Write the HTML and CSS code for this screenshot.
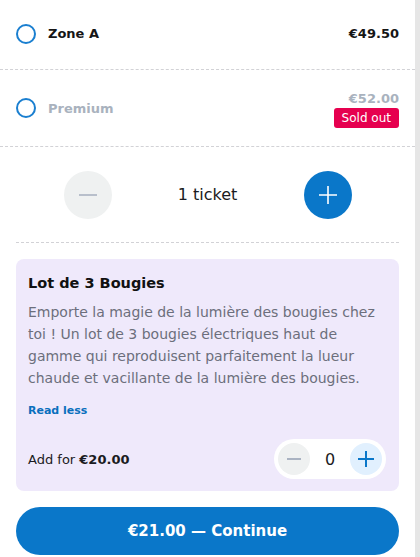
FILE: index.html
```html
<!DOCTYPE html>
<html lang="fr">
<head>
<meta charset="utf-8">
<title>Tickets</title>
<link rel="stylesheet" href="styles.css">
</head>
<body>
<div class="page">
  <main class="content">
    <div class="option">
      <span class="radio"></span>
      <span class="option-name">Zone A</span>
      <span class="option-price">€49.50</span>
    </div>
    <div class="option option-disabled">
      <span class="radio"></span>
      <span class="option-name">Premium</span>
      <span class="option-side">
        <span class="option-price">€52.00</span>
        <span class="badge">Sold out</span>
      </span>
    </div>
    <div class="qty">
      <button class="round round-off" aria-label="Moins">
        <svg width="20" height="20" viewBox="0 0 20 20"><path d="M1 10h18" stroke="#aab3c2" stroke-width="1.6"/></svg>
      </button>
      <span class="qty-label">1 ticket</span>
      <button class="round round-on" aria-label="Plus">
        <svg width="20" height="20" viewBox="0 0 20 20"><path d="M1 10h18M10 1v18" stroke="#fff" stroke-width="1.6"/></svg>
      </button>
    </div>
    <section class="card">
      <h2 class="card-title">Lot de 3 Bougies</h2>
      <p class="card-desc">Emporte la magie de la lumière des bougies chez toi ! Un lot de 3 bougies électriques haut de gamme qui reproduisent parfaitement la lueur chaude et vacillante de la lumière des bougies.</p>
      <a class="card-link" href="#">Read less</a>
      <div class="card-foot">
        <span class="add">Add for <b>€20.00</b></span>
        <div class="pill">
          <button class="mini mini-off" aria-label="Moins">
            <svg width="14" height="14" viewBox="0 0 14 14"><path d="M0 7h14" stroke="#aab3c2" stroke-width="2"/></svg>
          </button>
          <span class="pill-num">0</span>
          <button class="mini mini-on" aria-label="Plus">
            <svg width="16" height="16" viewBox="0 0 16 16"><path d="M0 8h16M8 0v16" stroke="#0a77c9" stroke-width="2"/></svg>
          </button>
        </div>
      </div>
    </section>
    <button class="continue">€21.00 — Continue</button>
  </main>
  <div class="track"></div>
</div>
</body>
</html>
```
FILE: styles.css
```css
* { box-sizing: border-box; }
html, body { margin: 0; padding: 0; background: #fff; }
body {
  font-family: "DejaVu Sans", "Liberation Sans", sans-serif;
  color: #161616;
}
.page {
  display: flex;
  width: 420px;
  min-height: 557px;
}
.content {
  flex: 1;
  display: flex;
  flex-direction: column;
  padding-bottom: 2px;
}
.track {
  width: 5px;
  background: #e6e6e6;
}
.option {
  display: flex;
  align-items: center;
  padding: 0 16px 0 16px;
  border-bottom: 1px dashed #d2d2d6;
}
.option:first-child { height: 70px; padding-bottom: 2px; }
.option-disabled { height: 77px; }
.radio {
  width: 20px;
  height: 20px;
  border: 2px solid #1a7fd0;
  border-radius: 50%;
  flex: none;
}
.option-name {
  margin-left: 12px;
  font-size: 13px;
  font-weight: bold;
  flex: 1;
}
.option-price {
  font-size: 13px;
  font-weight: bold;
}
.option-disabled .option-name,
.option-disabled .option-price { color: #a9b2be; }
.option-side {
  display: flex;
  flex-direction: column;
  align-items: flex-end;
  gap: 2px;
  margin-top: 2px;
}
.badge {
  background: #e6004f;
  color: #fff;
  font-size: 12px;
  line-height: 20px;
  padding: 0 8px;
  border-radius: 3px;
}
.qty {
  display: flex;
  align-items: center;
  justify-content: center;
  height: 96px;
  margin: 0 16px;
  border-bottom: 1px dashed #d2d2d6;
}
.round {
  width: 48px;
  height: 48px;
  border-radius: 50%;
  border: 0;
  padding: 0;
  display: flex;
  align-items: center;
  justify-content: center;
}
.round-off { background: #eff1f1; }
.round-on { background: #0a77c9; }
.qty-label {
  width: 192px;
  text-align: center;
  font-size: 16px;
  color: #1b1b22;
}
.card {
  margin: 16px 16px 0;
  background: #efe9fb;
  border-radius: 8px;
  padding: 14px 12px 12px;
  display: flex;
  flex-direction: column;
}
.card-title {
  margin: 0;
  font-size: 14.5px;
  line-height: 20px;
  font-weight: bold;
  color: #111;
}
.card-desc {
  margin: 8px 0 0;
  font-size: 14px;
  line-height: 22px;
  color: #6c6f7c;
}
.card-link {
  margin-top: 13px;
  font-size: 11px;
  line-height: 18px;
  font-weight: bold;
  color: #0a6fbd;
  text-decoration: none;
}
.card-foot {
  margin-top: 19px;
  display: flex;
  align-items: center;
  justify-content: space-between;
}
.add {
  font-size: 13px;
  color: #1b1b22;
}
.add b { font-weight: bold; }
.pill {
  display: flex;
  align-items: center;
  background: #fff;
  border-radius: 20px;
  padding: 4px;
  height: 40px;
  margin-right: 1px;
}
.mini {
  width: 32px;
  height: 32px;
  border-radius: 50%;
  border: 0;
  padding: 0;
  display: flex;
  align-items: center;
  justify-content: center;
}
.mini-off { background: #eff1f1; }
.mini-on { background: #e1f0fe; }
.pill-num {
  width: 40px;
  text-align: center;
  font-size: 16px;
  color: #1b1b22;
}
.continue {
  margin: 16px 16px 0;
  height: 48px;
  border: 0;
  border-radius: 24px;
  background: #0a77c9;
  color: #fff;
  font-family: "DejaVu Sans", "Liberation Sans", sans-serif;
  font-size: 15px;
  font-weight: bold;
}
```
